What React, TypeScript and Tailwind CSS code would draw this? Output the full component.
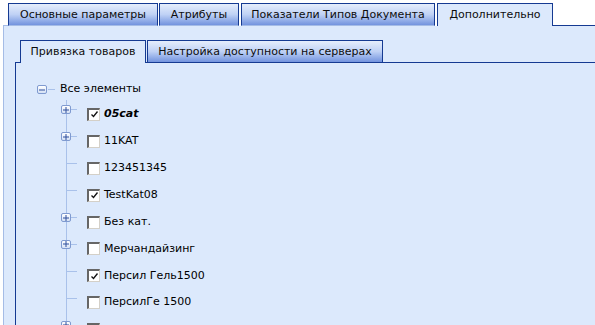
const navy = "border-[#153a92]";

const outerTabs = [
  { label: "Основные параметры", w: "w-[150px]" },
  { label: "Атрибуты", w: "w-[80px]" },
  { label: "Показатели Типов Документа", w: "w-[194px]" },
];

const items = [
  { label: "05cat", plus: true, checked: true, bold: true },
  { label: "11KAT", plus: true, checked: false },
  { label: "123451345", plus: false, checked: false },
  { label: "TestKat08", plus: false, checked: true },
  { label: "Без кат.", plus: true, checked: false },
  { label: "Мерчандайзинг", plus: true, checked: false },
  { label: "Персил Гель1500", plus: false, checked: true },
  { label: "ПерсилГе 1500", plus: false, checked: false },
  { label: "", plus: true, checked: false },
];

const ToggleBox = ({ open }: { open: boolean }) => (
  <span className="flex h-[9px] w-[10px] items-center justify-center rounded-[2px] border border-[#7f9ad0] bg-linear-to-b from-white to-[#d5e1f5]">
    <svg width="6" height="6" viewBox="0 0 6 6">
      <path d="M0 3h6" stroke="#2e4f9c" strokeWidth="1" />
      {!open && <path d="M3 0v6" stroke="#2e4f9c" strokeWidth="1" />}
    </svg>
  </span>
);

const Checkbox = ({ checked }: { checked: boolean }) => (
  <span className="flex h-[13px] w-[13px] shrink-0 items-center justify-center border-t-2 border-l-2 border-r border-b border-t-[#666] border-l-[#666] border-r-[#d4d0c8] border-b-[#d4d0c8] bg-white">
    {checked && (
      <svg width="9" height="9" viewBox="0 0 9 9">
        <path d="M1.5 4.5 L3.5 6.5 L7.5 1.5" fill="none" stroke="#111" strokeWidth="1.3" />
      </svg>
    )}
  </span>
);

export default function App() {
  return (
    <div
      className="h-[325px] w-[595px] overflow-hidden bg-white text-[11px] text-[#0d0d0d]"
      style={{ fontFamily: '"DejaVu Sans", Verdana, sans-serif' }}
    >
      {/* outer tabs */}
      <div className="flex items-end pt-[3px] pl-[3px]">
        <div className="h-[23px] w-[5px] border-b border-[#a5bce6]" />
        <div className="flex gap-[2px]">
          {outerTabs.map((t, i) => (
            <div
              key={t.label}
              className={`flex h-[23px] ${t.w} ${i === 1 ? "-ml-px" : ""} items-center justify-center border-t border-l border-r ${navy} border-b border-b-[#a5bce6] bg-linear-to-b from-[#e6eefc] via-[#bfd1f5] to-[#7393de] pt-px`}
            >
              {t.label}
            </div>
          ))}
          <div className={`flex h-[23px] w-[116px] items-center justify-center border-t border-l border-r ${navy} bg-[#dce9fc] pt-px`}>
            Дополнительно
          </div>
        </div>
        <div className={`h-[23px] flex-1 border-b ${navy}`} />
      </div>

      {/* outer panel */}
      <div className="ml-[3px] h-full border-l border-[#a5bce6] bg-[#dce9fc] pt-[14px]">
        <div className="ml-[11px]">
          {/* inner tabs */}
          <div className="flex items-end">
            <div className={`h-[23px] w-[5px] border-b ${navy}`} />
            <div className={`flex h-[23px] w-[126px] items-center justify-center border-t border-l border-r ${navy} bg-[#dce9fc] pt-px`}>
              Привязка товаров
            </div>
            <div className={`h-[23px] w-px border-b ${navy}`} />
            <div className={`flex h-[23px] w-[236px] items-center justify-center border ${navy} bg-linear-to-b from-[#e6eefc] via-[#bfd1f5] to-[#7393de] pt-px`}>
              Настройка доступности на серверах
            </div>
            <div className={`h-[23px] flex-1 border-b ${navy}`} />
          </div>

          {/* inner panel with tree */}
          <div className={`h-[300px] border-l ${navy} pt-[15px] text-black`}>
            <div className="relative">
              <div className="absolute left-[50px] top-[22px] bottom-0 w-px bg-[#a9c1ea]" />
              <div className="flex h-[23px] items-center">
                <div className="flex w-[44px] items-center pl-[21px]">
                  <ToggleBox open />
                  <span className="ml-[1px] h-px w-[7px] bg-[#a9c1ea]" />
                </div>
                <span>Все элементы</span>
              </div>
              {items.map((it, i) => (
                <div key={i} className="flex h-[26.9px] items-center">
                  <div className="relative h-full w-[71px] shrink-0">
                    <span className="absolute left-[50px] top-[calc(50%-5px)] h-px w-[11px] bg-[#a9c1ea]" />
                    {it.plus && (
                      <span className="absolute left-[45px] top-[calc(50%-9px)]">
                        <ToggleBox open={false} />
                      </span>
                    )}
                  </div>
                  <Checkbox checked={it.checked} />
                  <span className={`ml-[4px] ${it.bold ? "font-bold italic" : ""}`}>{it.label}</span>
                </div>
              ))}
            </div>
          </div>
        </div>
      </div>
    </div>
  );
}
